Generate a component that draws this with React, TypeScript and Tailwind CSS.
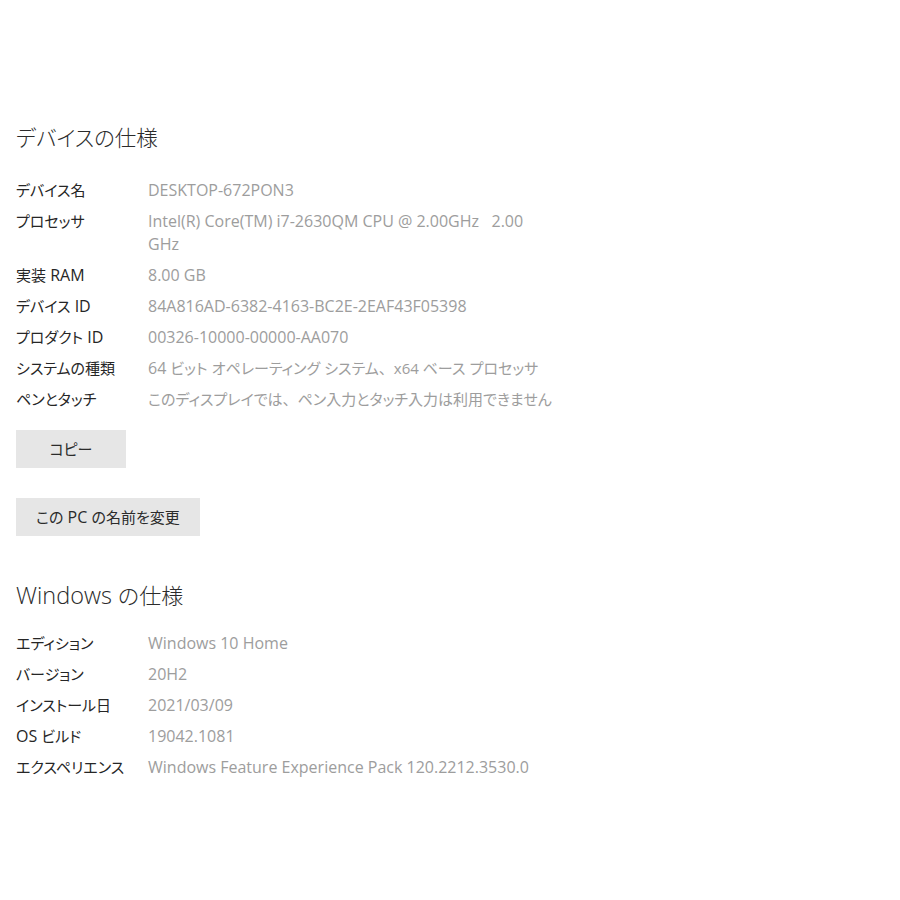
import React from "react";

const font = {
  fontFamily: '"Open Sans", "Noto Sans CJK JP", sans-serif',
};

const CJK = /([\u3040-\u30ff\u4e00-\u9fff\uff00-\uffef]+)/;

function Mixed({ text, cjk }: { text: string; cjk: string }) {
  const parts = text.split(CJK);
  return (
    <>
      {parts.map((p, i) =>
        CJK.test(p) ? (
          <span key={i} className={cjk}>
            {p}
          </span>
        ) : p.includes("、") ? (
          <span key={i} className="text-[15px]">
            {p}
          </span>
        ) : (
          <React.Fragment key={i}>{p}</React.Fragment>
        )
      )}
    </>
  );
}

type Row = { label: string; value: string };

const deviceRows: Row[] = [
  { label: "デバイス名", value: "DESKTOP-672PON3" },
  { label: "プロセッサ", value: "Intel(R) Core(TM) i7-2630QM CPU @ 2.00GHz   2.00 GHz" },
  { label: "実装 RAM", value: "8.00 GB" },
  { label: "デバイス ID", value: "84A816AD-6382-4163-BC2E-2EAF43F05398" },
  { label: "プロダクト ID", value: "00326-10000-00000-AA070" },
  { label: "システムの種類", value: "64 ビット オペレーティング システム、x64 ベース プロセッサ" },
  { label: "ペンとタッチ", value: "このディスプレイでは、ペン入力とタッチ入力は利用できません" },
];

const windowsRows: Row[] = [
  { label: "エディション", value: "Windows 10 Home" },
  { label: "バージョン", value: "20H2" },
  { label: "インストール日", value: "2021/03/09" },
  { label: "OS ビルド", value: "19042.1081" },
  { label: "エクスペリエンス", value: "Windows Feature Experience Pack 120.2212.3530.0" },
];

function Rows({ rows }: { rows: Row[] }) {
  return (
    <div className="flex flex-col gap-2">
      {rows.map((r) => (
        <div key={r.label} className="flex text-[16px] leading-[23px]">
          <div className="w-[132px] shrink-0 text-[#262626]">
            <Mixed text={r.label} cjk="text-[15px] [font-feature-settings:'palt']" />
          </div>
          <div className="w-[405px] text-[#9d9d9d] whitespace-pre-wrap">
            <Mixed text={r.value} cjk="text-[15px] [font-feature-settings:'palt']" />
          </div>
        </div>
      ))}
    </div>
  );
}

function Btn({ label }: { label: string }) {
  return (
    <button className="h-[38px] min-w-[110px] bg-[#e6e6e6] px-[20px] text-[16px] leading-[23px] text-[#2b2b2b]">
      <Mixed text={label} cjk="text-[15px] [font-feature-settings:'palt']" />
    </button>
  );
}

export default function App() {
  return (
    <div className="w-[900px] min-h-[900px] bg-white pl-4 pt-[122px]" style={font}>
      <h2 className="h-[30px] text-[23px] leading-[30px] text-[#2b2b2b] font-light">
        <Mixed text="デバイスの仕様" cjk="text-[21.5px] [font-feature-settings:'palt']" />
      </h2>
      <div className="mt-[27px]">
        <Rows rows={deviceRows} />
      </div>
      <div className="mt-[19px] flex flex-col items-start gap-[30px]">
        <Btn label="コピー" />
        <Btn label="この PC の名前を変更" />
      </div>
      <h2 className="mt-[44px] h-[30px] text-[23.5px] leading-[30px] text-[#2b2b2b] font-light">
        <Mixed text="Windows の仕様" cjk="text-[22px] [font-feature-settings:'palt']" />
      </h2>
      <div className="mt-[22px]">
        <Rows rows={windowsRows} />
      </div>
    </div>
  );
}
